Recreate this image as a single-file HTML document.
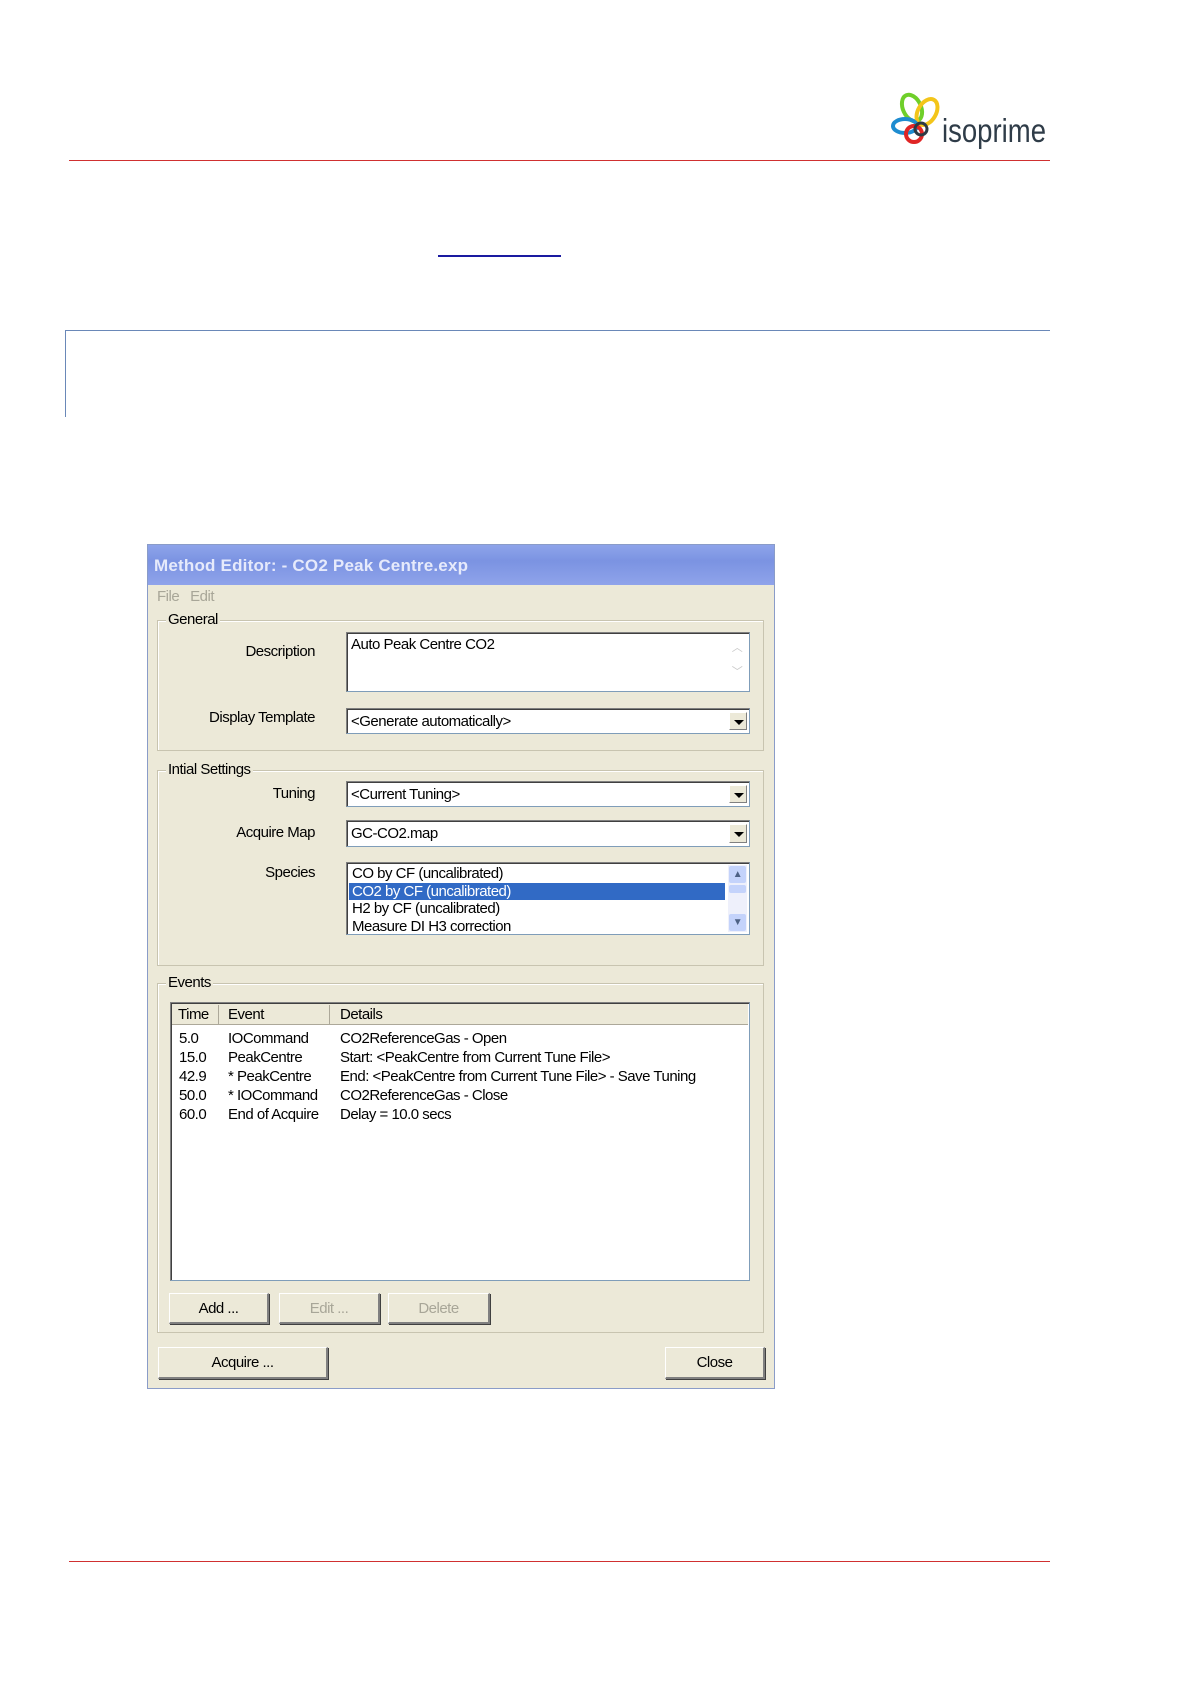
<!DOCTYPE html>
<html><head><meta charset="utf-8"><style>
*{margin:0;padding:0;box-sizing:border-box}
body{width:1191px;height:1683px;background:#fff;position:relative;font-family:"Liberation Sans",sans-serif;overflow:hidden}
.abs{position:absolute}
.dlg{position:absolute;left:147px;top:544px;width:628px;height:845px;background:#ece9d8;border:1px solid #8a9cc8;font-size:15px;color:#000;letter-spacing:-0.5px}
.dlg .a{position:absolute}
.title{left:0;top:0;width:626px;height:40px;background:linear-gradient(#8ea4ea,#7b93e2 40%,#8fa3ea);color:#e6eafb;font-weight:bold;font-size:17px;padding:11px 0 0 6px;letter-spacing:0.2px}
.grp{position:absolute;border:1px solid #c8c4b0;box-shadow:inset 1px 1px 0 #fff}
.gl{position:absolute;background:#ece9d8;padding:0 2px;top:-10px;left:8px}
.lab{position:absolute;text-align:right;width:200px}
.box{position:absolute;background:#fff;border:1px solid #7f9db9;border-top-color:#808080;border-left-color:#808080;box-shadow:inset 1px 1px 0 #404040}
.dd{position:absolute;right:2px;top:3px;width:18px;bottom:3px;background:#ece9d8;border:1px solid #fff;border-right-color:#808080;border-bottom-color:#808080}
.dd:after{content:"";position:absolute;left:4px;top:7px;border-left:5px solid transparent;border-right:5px solid transparent;border-top:5px solid #000}
.btn{position:absolute;background:#ece9d8;border:1px solid #fff;border-right:2px solid #808080;border-bottom:2px solid #808080;box-shadow:1px 1px 0 #404040;text-align:center;padding-top:6px}
.dis{color:#a8a698}
</style></head><body>
<div class="abs" style="left:69px;top:160px;width:981px;height:1px;background:#d03030"></div>
<svg class="abs" style="left:890px;top:90px" width="165" height="62" viewBox="0 0 165 62">
<ellipse cx="22" cy="18" rx="9" ry="14" transform="rotate(-25 22 18)" fill="none" stroke="#6fcf2a" stroke-width="4"/>
<ellipse cx="37" cy="22" rx="9" ry="14" transform="rotate(30 37 22)" fill="none" stroke="#f3c51a" stroke-width="4"/>
<ellipse cx="15" cy="36" rx="12" ry="7" fill="none" stroke="#1e8cd0" stroke-width="4"/>
<circle cx="24" cy="44" r="8" fill="none" stroke="#e02525" stroke-width="4"/>
<circle cx="31" cy="39" r="6" fill="none" stroke="#2c3a44" stroke-width="3"/>
<text x="52" y="52" font-family="Liberation Sans,sans-serif" font-size="33" fill="#2f3c48" textLength="104" lengthAdjust="spacingAndGlyphs">isoprime</text>
</svg>
<div class="abs" style="left:438px;top:255px;width:123px;height:2px;background:#1a1aa0"></div>
<div class="abs" style="left:65px;top:330px;width:985px;height:1px;background:#6a88b8"></div>
<div class="abs" style="left:65px;top:330px;width:1px;height:87px;background:#6a88b8"></div>

<div class="dlg">
 <div class="a title">Method Editor: - CO2 Peak Centre.exp</div>
 <div class="a dis" style="left:9px;top:43px">File &nbsp; Edit</div>

 <div class="grp" style="left:9px;top:75px;width:607px;height:131px"><span class="gl">General</span></div>
 <div class="lab" style="left:-33px;top:98px">Description</div>
 <div class="box" style="left:198px;top:87px;width:404px;height:60px;padding:3px 4px">Auto Peak Centre CO2
  <div class="a" style="right:3px;top:3px;width:18px;height:52px;color:#c8c8c8;font-size:11px;text-align:center;line-height:24px">︿<br>﹀</div></div>
 <div class="lab" style="left:-33px;top:164px">Display Template</div>
 <div class="box" style="left:198px;top:163px;width:404px;height:26px;padding:4px 4px">&lt;Generate automatically&gt;<div class="dd"></div></div>

 <div class="grp" style="left:9px;top:225px;width:607px;height:196px"><span class="gl">Intial Settings</span></div>
 <div class="lab" style="left:-33px;top:240px">Tuning</div>
 <div class="box" style="left:198px;top:236px;width:404px;height:26px;padding:4px 4px">&lt;Current Tuning&gt;<div class="dd"></div></div>
 <div class="lab" style="left:-33px;top:279px">Acquire Map</div>
 <div class="box" style="left:198px;top:275px;width:404px;height:27px;padding:4px 4px">GC-CO2.map<div class="dd"></div></div>
 <div class="lab" style="left:-33px;top:319px">Species</div>
 <div class="box" style="left:198px;top:317px;width:404px;height:73px;padding:2px 2px;line-height:17.7px">
  <div style="padding-left:3px">CO by CF (uncalibrated)</div>
  <div style="padding-left:3px;background:#316ac5;color:#fff;width:376px">CO2 by CF (uncalibrated)</div>
  <div style="padding-left:3px">H2 by CF (uncalibrated)</div>
  <div style="padding-left:3px">Measure DI H3 correction</div>
  <div class="a" style="right:2px;top:2px;width:19px;bottom:2px;background:#eef0fb"></div>
  <div class="a" style="right:3px;top:3px;width:17px;height:17px;background:#c4d3fb;border-radius:2px;color:#4d6185;font-size:10px;text-align:center;line-height:17px">▲</div>
  <div class="a" style="right:3px;top:22px;width:17px;height:8px;background:#c4d3fb;border-radius:2px"></div>
  <div class="a" style="right:3px;bottom:3px;width:17px;height:17px;background:#c4d3fb;border-radius:2px;color:#4d6185;font-size:10px;text-align:center;line-height:17px">▼</div>
 </div>

 <div class="grp" style="left:9px;top:438px;width:607px;height:350px"><span class="gl">Events</span></div>
 <div class="box" style="left:22px;top:457px;width:580px;height:279px">
  <div class="a" style="left:1px;top:1px;right:1px;height:21px;background:#ece9d8;border-bottom:1px solid #aca899"></div>
  <div class="a" style="left:7px;top:3px">Time</div>
  <div class="a" style="left:47px;top:2px;width:1px;height:20px;background:#aca899"></div>
  <div class="a" style="left:57px;top:3px">Event</div>
  <div class="a" style="left:158px;top:2px;width:1px;height:20px;background:#aca899"></div>
  <div class="a" style="left:169px;top:3px">Details</div>
  <div class="a" style="left:8px;top:26px;line-height:19px">5.0<br>15.0<br>42.9<br>50.0<br>60.0</div>
  <div class="a" style="left:57px;top:26px;line-height:19px">IOCommand<br>PeakCentre<br>* PeakCentre<br>* IOCommand<br>End of Acquire</div>
  <div class="a" style="left:169px;top:26px;line-height:19px">CO2ReferenceGas - Open<br>Start: &lt;PeakCentre from Current Tune File&gt;<br>End: &lt;PeakCentre from Current Tune File&gt; - Save Tuning<br>CO2ReferenceGas - Close<br>Delay = 10.0 secs</div>
 </div>
 <div class="btn" style="left:21px;top:748px;width:100px;height:31px">Add ...</div>
 <div class="btn dis" style="left:131px;top:748px;width:101px;height:31px">Edit ...</div>
 <div class="btn dis" style="left:240px;top:748px;width:102px;height:31px">Delete</div>
 <div class="btn" style="left:10px;top:802px;width:170px;height:32px">Acquire ...</div>
 <div class="btn" style="left:517px;top:802px;width:100px;height:32px">Close</div>
</div>
<div class="abs" style="left:69px;top:1561px;width:981px;height:1px;background:#d03030"></div>
</body></html>
